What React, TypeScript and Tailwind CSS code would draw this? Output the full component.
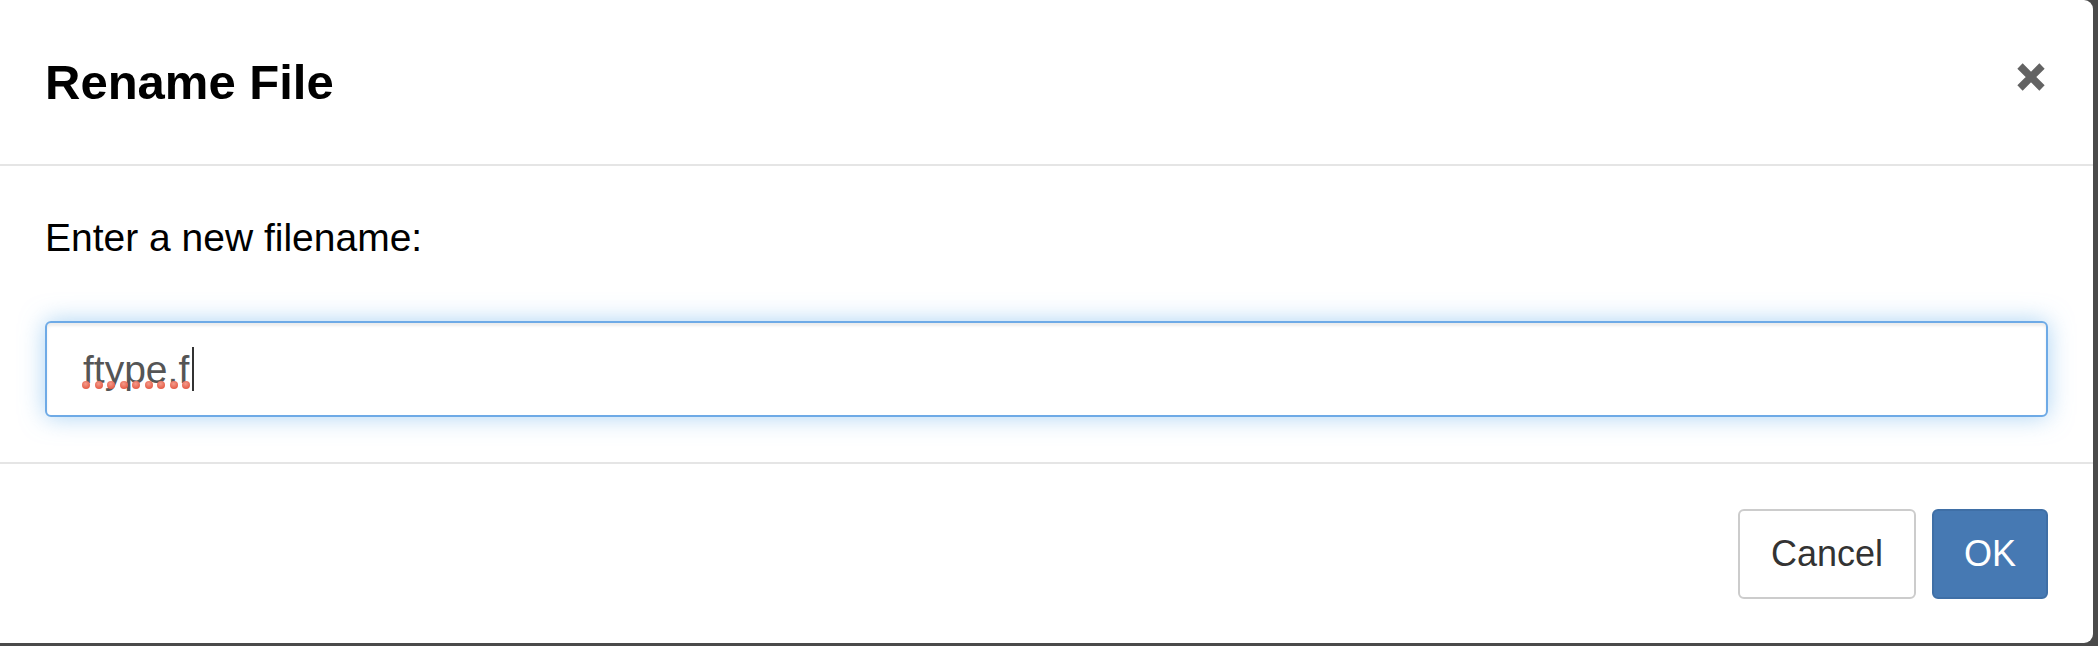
import React from "react";

export default function App() {
  const dots = Array.from({ length: 9 });
  return (
    <div
      className="w-[2098px] h-[646px] bg-[#4a4a4a] flex flex-col overflow-hidden"
      style={{ fontFamily: '"Liberation Sans", Arial, Helvetica, sans-serif' }}
    >
      <div className="w-[2093px] h-[643px] bg-white rounded-tr-[9px] rounded-br-[9px] flex flex-col">
        {/* Header */}
        <div className="h-[166px] px-[45px] flex items-center justify-between border-b-2 border-[#e5e5e5]">
          <h4 className="text-[49px] leading-[73px] font-bold text-black m-0">Rename File</h4>
          <button className="mr-[2px] mb-[10px] w-[30px] h-[30px] flex items-center justify-center">
            <svg width="30" height="30" viewBox="0 0 30 30">
              <path d="M4 4 L26 26 M26 4 L4 26" stroke="#636363" strokeWidth="7.5" strokeLinecap="butt" />
            </svg>
          </button>
        </div>

        {/* Body */}
        <div className="px-[45px] pt-[45px] pb-[45px] border-b-2 border-[#e5e5e5] flex flex-col">
          <p className="text-[39px] leading-[54px] text-black m-0">Enter a new filename:</p>
          <div className="mt-[56px] h-[96px] w-full border-2 border-[#6eaae6] rounded-[6px] bg-white shadow-[0_0_24px_rgba(102,175,233,0.55),inset_0_3px_3px_rgba(0,0,0,0.075)] flex items-center pl-[36px]">
            <span className="relative text-[39px] leading-[45px] text-[#555555]">
              ftype.f
              <span className="absolute left-[-1px] right-[-1px] top-[34px] flex justify-between">
                {dots.map((_, i) => (
                  <span
                    key={i}
                    className="block w-[8px] h-[8px] rounded-full bg-[radial-gradient(circle_at_45%_35%,#f49a8a,#e0472f)]"
                  />
                ))}
              </span>
            </span>
            <span className="ml-[3px] w-[2px] h-[44px] bg-[#333333]" />
          </div>
        </div>

        {/* Footer */}
        <div className="flex-1 px-[45px] flex items-center justify-end gap-[16px]">
          <button className="h-[90px] px-[31px] border-2 border-[#cccccc] rounded-[6px] bg-white text-[36px] text-[#333333] leading-[54px]">
            Cancel
          </button>
          <button className="h-[90px] px-[30px] border-2 border-[#3f6fa6] rounded-[6px] bg-[#4679b3] text-[36px] text-white leading-[54px]">
            OK
          </button>
        </div>
      </div>
    </div>
  );
}
